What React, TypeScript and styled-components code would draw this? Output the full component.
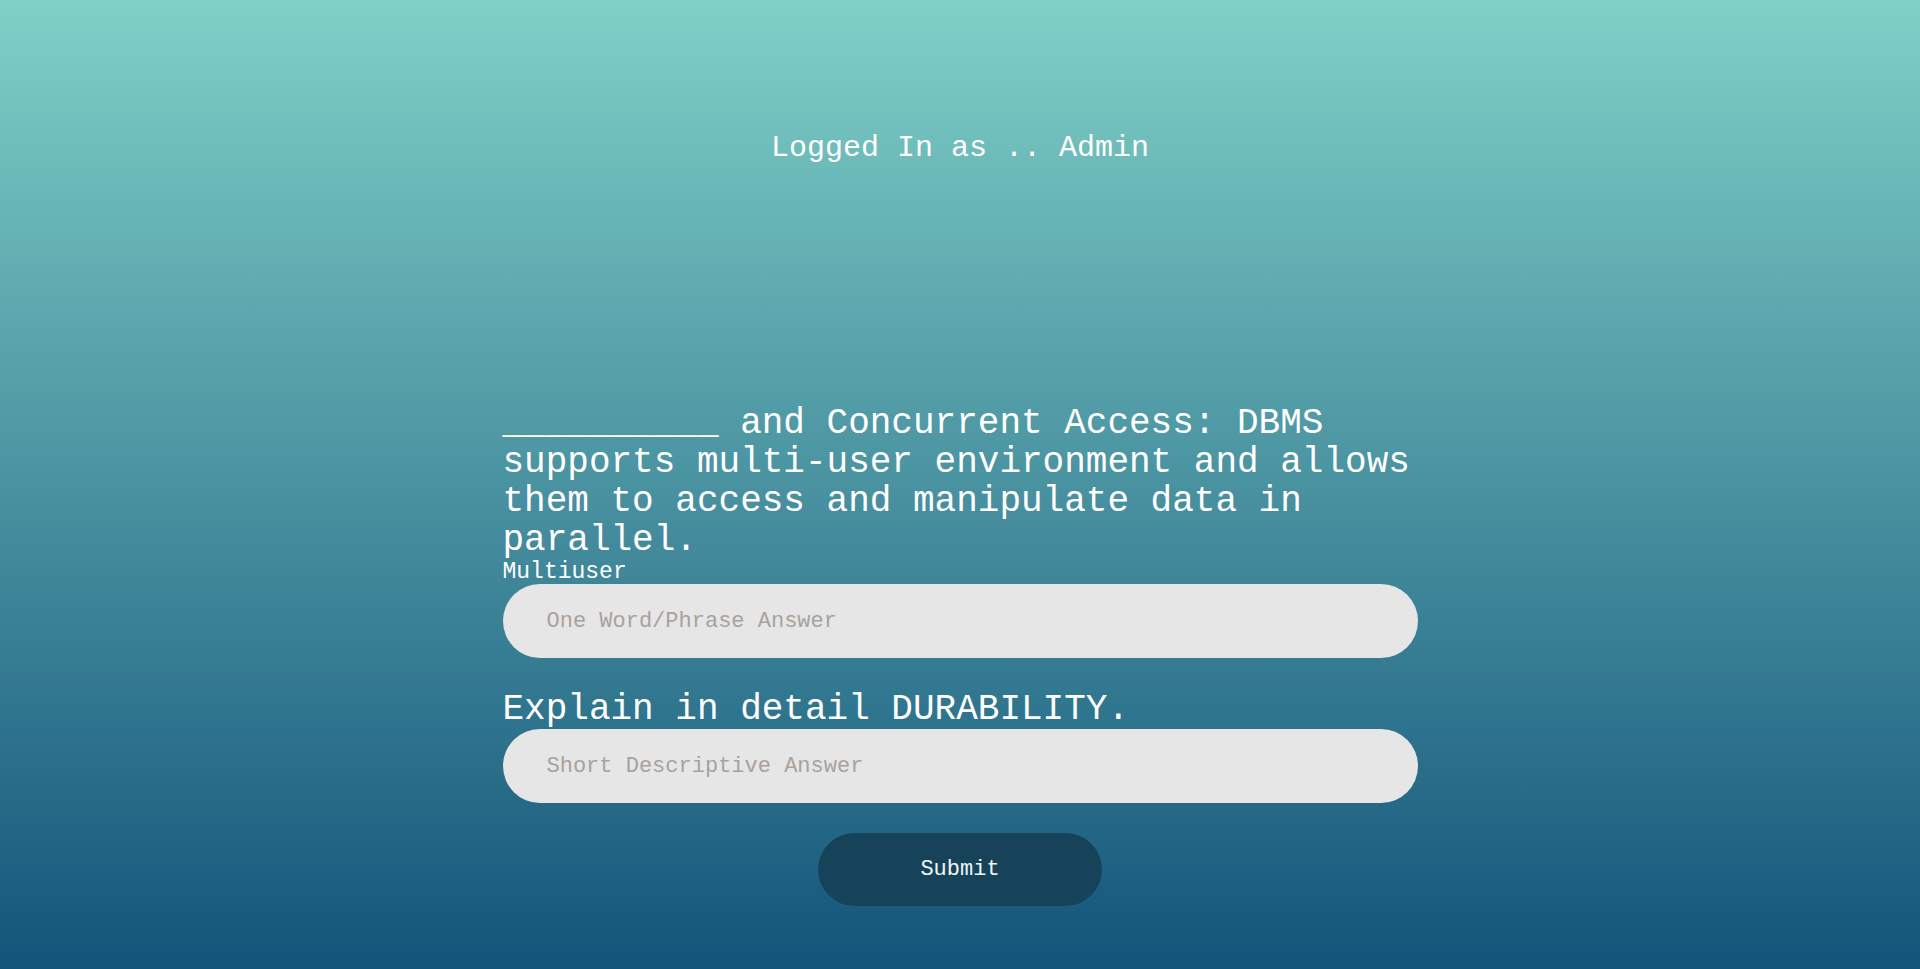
import React from "react";
import styled, { createGlobalStyle } from "styled-components";

const Global = createGlobalStyle`
  html, body { margin: 0; padding: 0; }
  body {
    min-height: 100vh;
    background: linear-gradient(to bottom, #80d0c7 0%, #13547a 100%);
    background-attachment: fixed;
    font-family: "Liberation Mono", "DejaVu Sans Mono", monospace;
    color: #ffffff;
  }
`;

const Page = styled.div`
  min-height: 100vh;
  display: flex;
  flex-direction: column;
  align-items: center;
`;

const Status = styled.h2`
  margin: 129px 0 0;
  font-size: 30px;
  line-height: 38px;
  font-weight: 400;
  color: #ffffff;
`;

const Form = styled.form`
  width: 915px;
  margin-top: 237px;
  display: flex;
  flex-direction: column;
`;

const QuestionBlock = styled.div<{ $gapTop?: number }>`
  display: flex;
  flex-direction: column;
  margin-top: ${(p) => p.$gapTop ?? 0}px;
`;

const QuestionText = styled.p`
  margin: 0;
  font-size: 36px;
  line-height: 39px;
  font-weight: 400;
  color: #ffffff;
`;

const Hint = styled.span`
  font-size: 23px;
  line-height: 24px;
  color: #ffffff;
`;

const Answer = styled.input`
  box-sizing: border-box;
  width: 100%;
  height: 74px;
  border: none;
  outline: none;
  border-radius: 37px;
  background: #e6e6e6;
  padding: 0 44px;
  font-family: "Liberation Mono", "DejaVu Sans Mono", monospace;
  font-size: 22px;
  color: #333;
  &::placeholder {
    color: #a8a29e;
  }
`;

const Submit = styled.button`
  align-self: center;
  margin-top: 30px;
  width: 284px;
  height: 73px;
  border: none;
  border-radius: 37px;
  background: #16435a;
  color: #eef6f8;
  font-family: "Liberation Mono", "DejaVu Sans Mono", monospace;
  font-size: 22px;
  cursor: pointer;
`;

export default function App() {
  return (
    <>
      <Global />
      <Page>
        <Status>Logged In as .. Admin</Status>
        <Form onSubmit={(e) => e.preventDefault()}>
          <QuestionBlock>
            <QuestionText>
              __________ and Concurrent Access: DBMS supports multi-user
              environment and allows them to access and manipulate data in
              parallel.
            </QuestionText>
            <Hint>Multiuser</Hint>
          </QuestionBlock>
          <Answer placeholder="One Word/Phrase Answer" />
          <QuestionBlock $gapTop={32}>
            <QuestionText>Explain in detail DURABILITY.</QuestionText>
          </QuestionBlock>
          <Answer placeholder="Short Descriptive Answer" />
          <Submit type="submit">Submit</Submit>
        </Form>
      </Page>
    </>
  );
}
